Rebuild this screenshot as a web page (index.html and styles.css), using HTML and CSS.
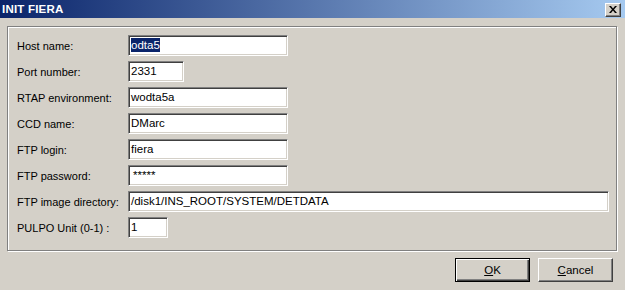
FILE: index.html
```html
<!DOCTYPE html>
<html>
<head>
    <title>INIT FIERA</title>
    <link rel="stylesheet" href="styles.css">
</head>
<body>
    <div class="window">
        <div class="titlebar">
            <span class="title">INIT FIERA</span>
            <div class="close-btn">
                <svg width="8" height="7" viewBox="0 0 8 7">
                    <path d="M0 0h2l2 2.5 2-2.5h2l-3 3.5 3 3.5h-2l-2-2.5-2 2.5h-2l3-3.5z" fill="#000"/>
                </svg>
            </div>
        </div>

        <div class="group">
            <label class="lbl">Host name:</label>
            <div class="field w-md"><span class="sel">odta5</span></div>

            <label class="lbl">Port number:</label>
            <div class="field w-sm">2331</div>

            <label class="lbl">RTAP environment:</label>
            <div class="field w-md">wodta5a</div>

            <label class="lbl">CCD name:</label>
            <div class="field w-md">DMarc</div>

            <label class="lbl">FTP login:</label>
            <div class="field w-md">fiera</div>

            <label class="lbl">FTP password:</label>
            <div class="field w-md pwd">*****</div>

            <label class="lbl">FTP image directory:</label>
            <div class="field w-xl">/disk1/INS_ROOT/SYSTEM/DETDATA</div>

            <label class="lbl">PULPO Unit (0-1) :</label>
            <div class="field w-xs">1</div>
        </div>

        <div class="footer">
            <button class="btn btn-default"><u>O</u>K</button>
            <button class="btn"><u>C</u>ancel</button>
        </div>
    </div>
</body>
</html>
```

FILE: styles.css
```css
body {
    margin: 0;
    background-color: #d4d0c8;
    font-family: "Liberation Sans", Arial, sans-serif;
    font-size: 11px;
    color: #000;
}

.window {
    width: 625px;
    height: 290px;
    background-color: #d4d0c8;
}

.titlebar {
    height: 18px;
    display: flex;
    align-items: center;
    justify-content: space-between;
    padding: 0 4px 0 2px;
    background: linear-gradient(to right, #0a246a, #a6caf0);
}

.title {
    color: #fff;
    font-weight: bold;
    font-size: 11.5px;
    letter-spacing: 0.2px;
}

.close-btn {
    width: 16px;
    height: 14px;
    box-sizing: border-box;
    margin-top: 1px;
    display: flex;
    align-items: center;
    justify-content: center;
    background-color: #d4d0c8;
    border-top: 1px solid #fff;
    border-left: 1px solid #fff;
    border-right: 1px solid #404040;
    border-bottom: 1px solid #404040;
    box-shadow: inset -1px -1px 0 #808080;
}

.group {
    margin: 8px 0 0 7px;
    width: 610px;
    height: 225px;
    box-sizing: border-box;
    padding: 8px 9px;
    border: 1px solid #808080;
    box-shadow: 1px 1px 0 #fff, inset 1px 1px 0 #fff;
    display: grid;
    grid-template-columns: 111px auto;
    grid-auto-rows: 21px;
    row-gap: 5px;
    align-items: center;
}

.lbl {
    white-space: nowrap;
}

.field {
    height: 21px;
    box-sizing: border-box;
    padding: 0 2px;
    background-color: #fff;
    border-top: 1px solid #808080;
    border-left: 1px solid #808080;
    border-right: 1px solid #fff;
    border-bottom: 1px solid #fff;
    box-shadow: inset 1px 1px 0 #404040, inset -1px -1px 0 #d4d0c8;
    font-size: 11.5px;
    line-height: 19px;
    white-space: nowrap;
    overflow: hidden;
}

.pwd {
    padding-left: 4px;
}

.sel {
    background-color: #0a246a;
    color: #fff;
    padding: 1px 0;
}

.w-md { width: 160px; }
.w-sm { width: 56px; }
.w-xl { width: 481px; }
.w-xs { width: 40px; }

.footer {
    display: flex;
    justify-content: flex-end;
    gap: 8px;
    padding: 7px 12px 0 0;
}

.btn {
    width: 75px;
    height: 24px;
    box-sizing: border-box;
    padding: 0;
    font-family: "Liberation Sans", Arial, sans-serif;
    font-size: 11.5px;
    color: #000;
    background-color: #d4d0c8;
    border-top: 1px solid #fff;
    border-left: 1px solid #fff;
    border-right: 1px solid #404040;
    border-bottom: 1px solid #404040;
    box-shadow: inset -1px -1px 0 #808080;
}

.btn-default {
    border: 1px solid #000;
    box-shadow: inset 1px 1px 0 #fff, inset -1px -1px 0 #404040, inset -2px -2px 0 #808080;
}
```
